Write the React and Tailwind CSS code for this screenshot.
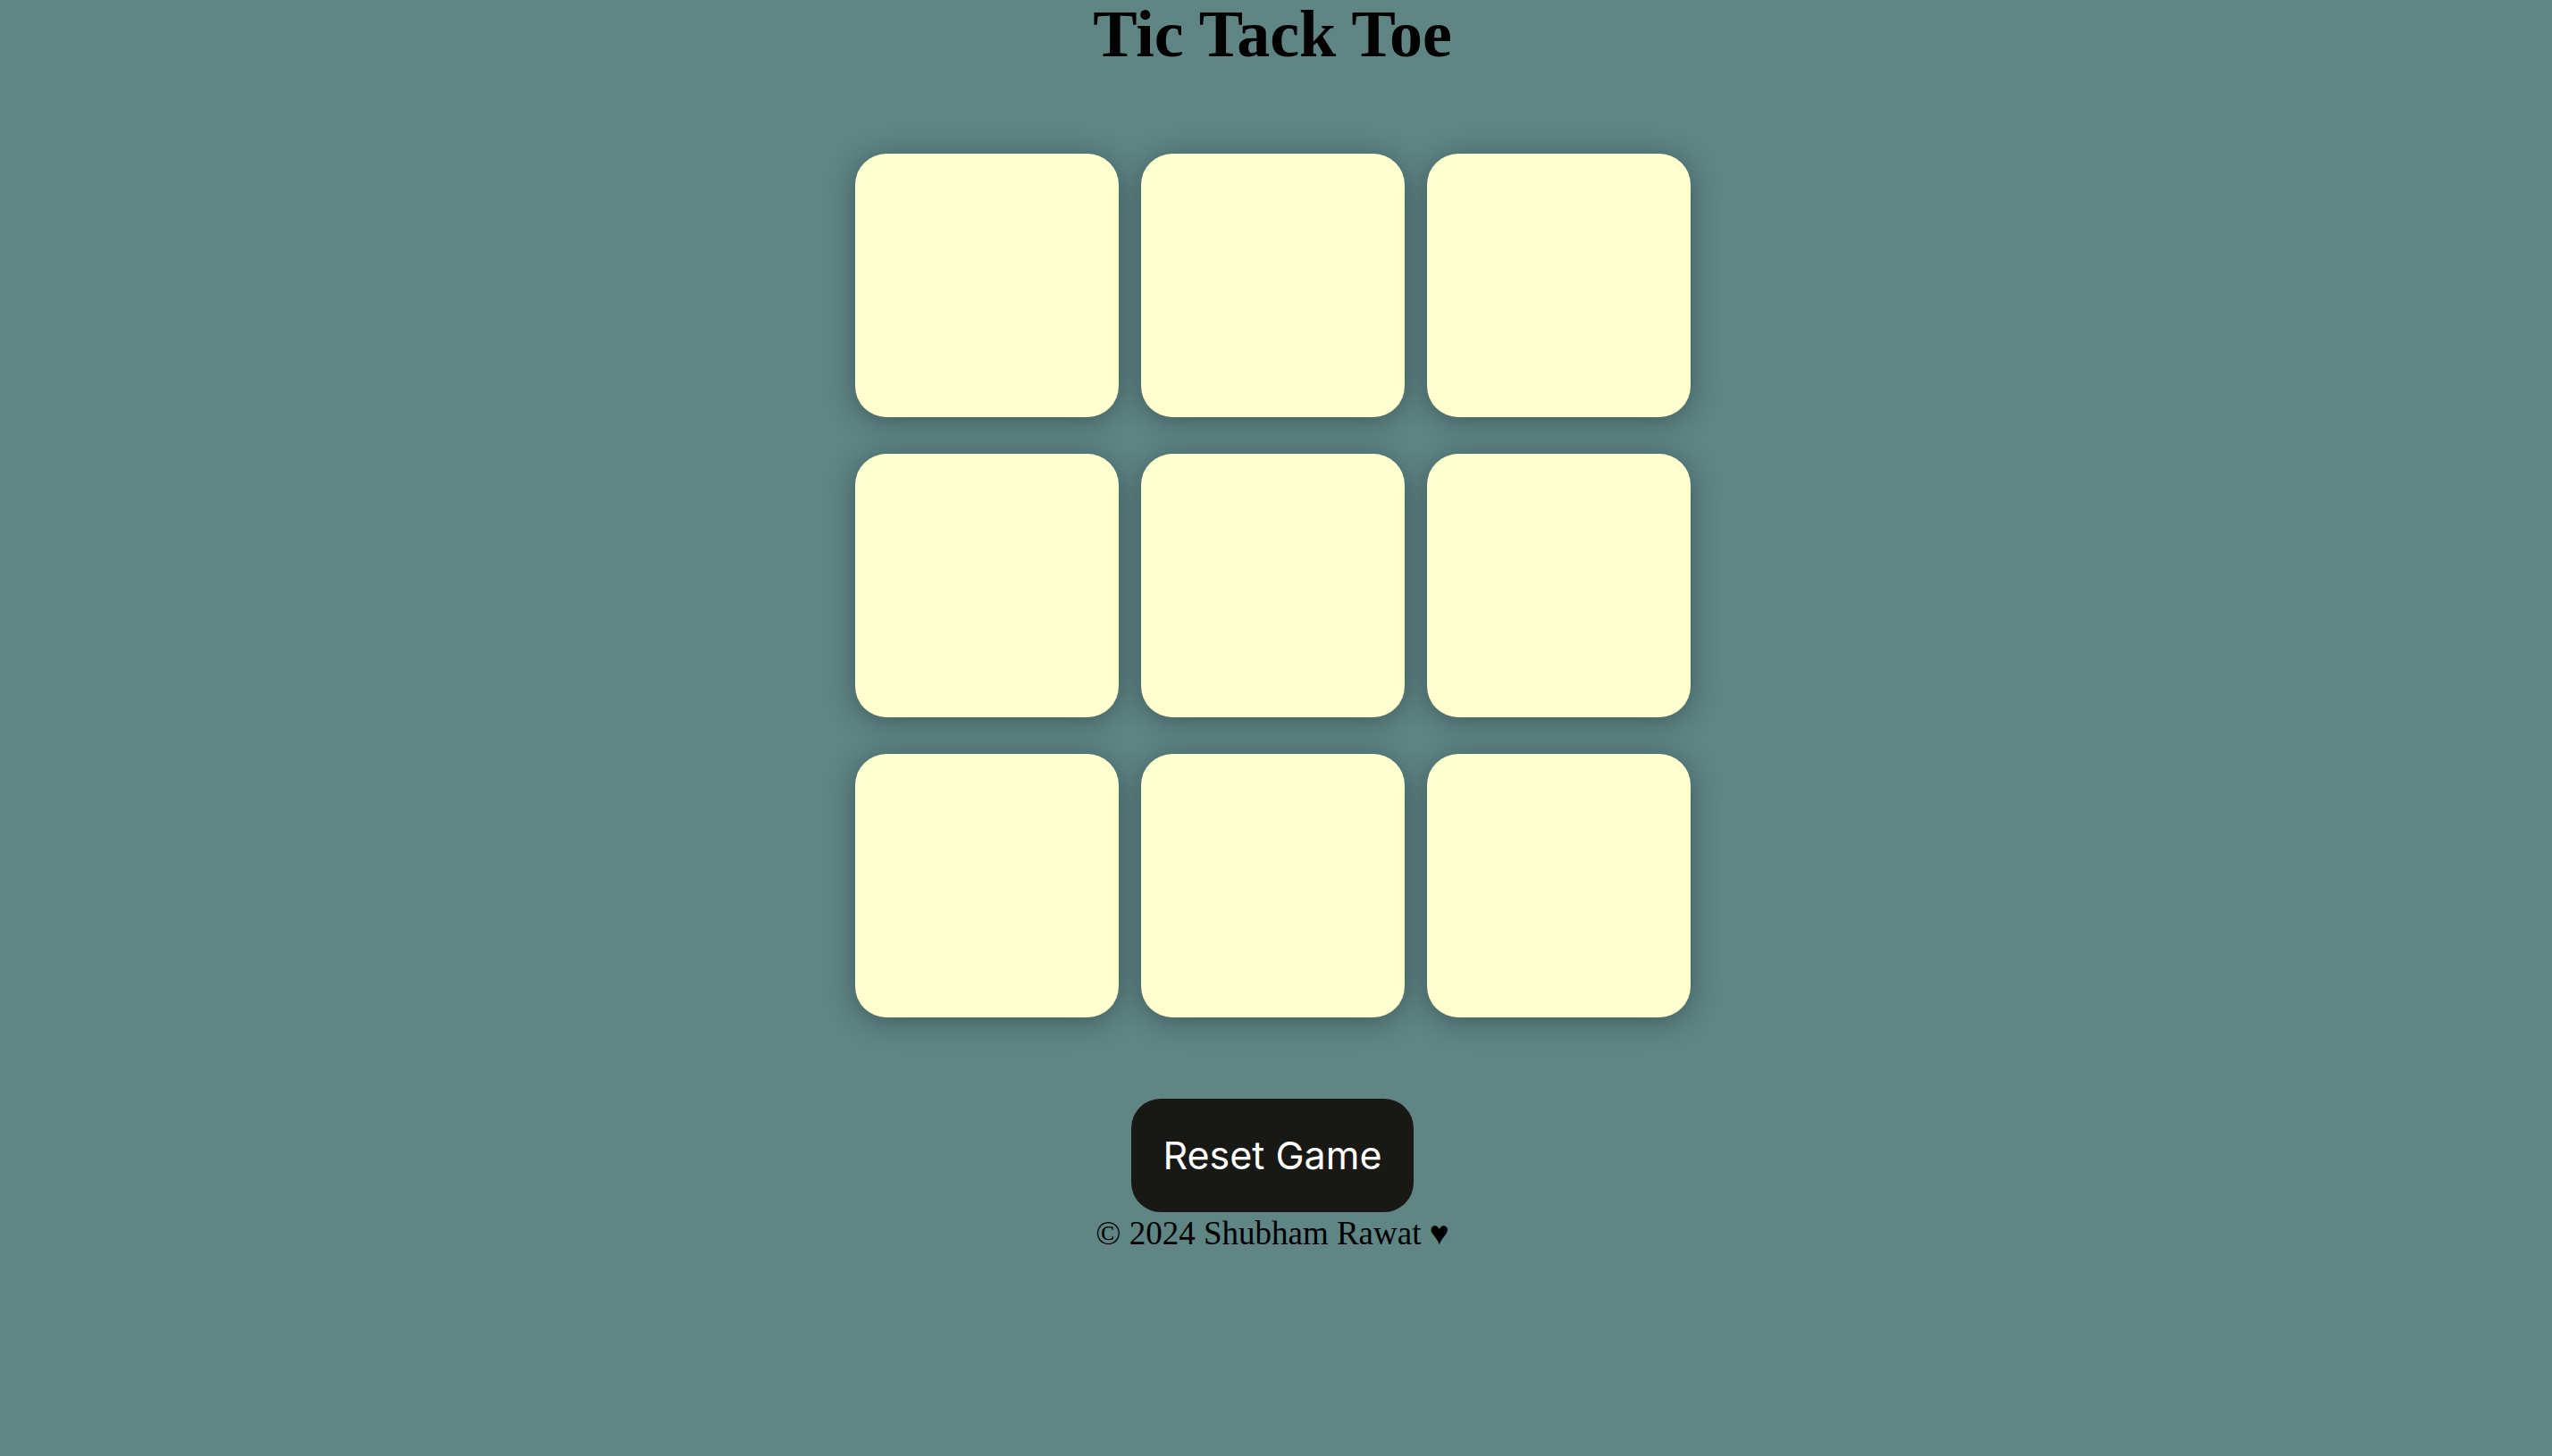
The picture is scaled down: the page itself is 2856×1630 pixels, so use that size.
import { useState } from "react";

export default function App() {
  const [cells, setCells] = useState(Array(9).fill(""));
  const [turn, setTurn] = useState("X");

  const play = (i) => {
    if (cells[i]) return;
    const next = [...cells];
    next[i] = turn;
    setCells(next);
    setTurn(turn === "X" ? "O" : "X");
  };

  const reset = () => {
    setCells(Array(9).fill(""));
    setTurn("X");
  };

  return (
    <div className="min-h-screen bg-[#5f8585] pr-2 flex flex-col items-center">
      <h1 className="-mt-[4px] text-[74px] leading-[84px] font-bold text-black font-['Liberation_Serif',serif]">
        Tic Tack Toe
      </h1>

      <div className="mt-[92px] grid grid-cols-[repeat(3,295px)] gap-x-[25px] gap-y-[41px]">
        {cells.map((c, i) => (
          <button
            key={i}
            onClick={() => play(i)}
            className="w-[295px] h-[295px] rounded-[35px] bg-[#ffffd0] shadow-[0_4px_32px_rgba(0,0,0,0.32)] flex items-center justify-center text-[140px] font-bold text-[#181814] font-['Inter',sans-serif]"
          >
            {c}
          </button>
        ))}
      </div>

      <button
        onClick={reset}
        className="mt-[91px] w-[316px] h-[127px] rounded-[33px] bg-[#181814] text-white text-[43px] font-['Inter',sans-serif] flex items-center justify-center"
      >
        Reset Game
      </button>

      <p className="-mt-[4px] text-[37px] text-black font-['Liberation_Serif',serif]">
        © 2024 Shubham Rawat ♥
      </p>
    </div>
  );
}
